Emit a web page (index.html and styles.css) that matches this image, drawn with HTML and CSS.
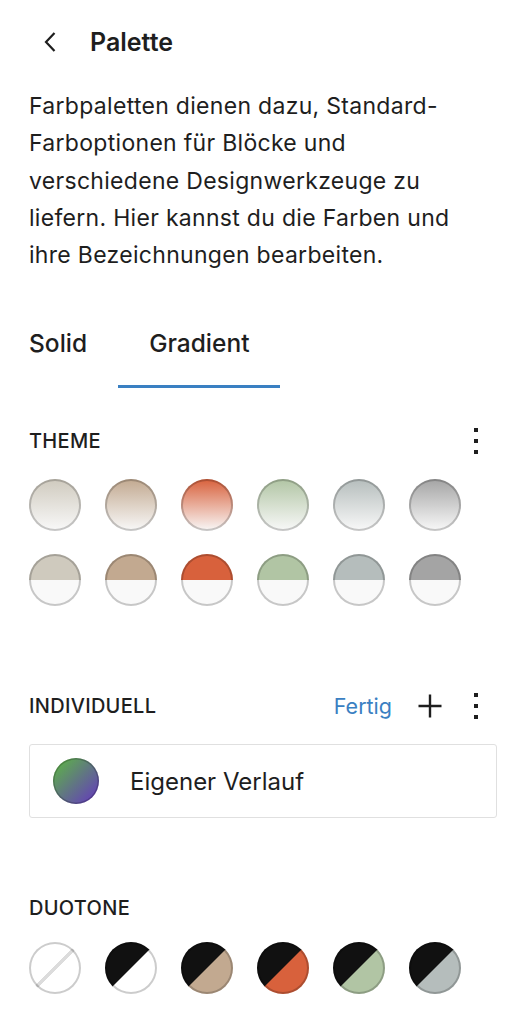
FILE: index.html
```html
<!DOCTYPE html>
<html lang="de">
<head>
<meta charset="utf-8">
<title>Palette</title>
<link rel="stylesheet" href="styles.css">
</head>
<body>
<div class="panel">
  <header class="header">
    <button class="back" aria-label="Zurück">
      <svg width="14" height="22" viewBox="0 0 14 22"><path d="M11.5 2 L3 11 L11.5 20" fill="none" stroke="#1e1e1e" stroke-width="2.2"/></svg>
    </button>
    <h1 class="title">Palette</h1>
  </header>
  <p class="desc">Farbpaletten dienen dazu, Standard-Farboptionen für Blöcke und verschiedene Designwerkzeuge zu liefern. Hier kannst du die Farben und ihre Bezeichnungen bearbeiten.</p>

  <div class="tabs">
    <div class="tab">Solid</div>
    <div class="tab active">Gradient</div>
  </div>

  <section class="sec sec-theme">
    <div class="sec-head">
      <span class="label">THEME</span>
      <span class="kebab"><i></i><i></i><i></i></span>
    </div>
    <div class="swatches">
      <span class="sw g1"></span><span class="sw g2"></span><span class="sw g3"></span><span class="sw g4"></span><span class="sw g5"></span><span class="sw g6"></span>
      <span class="sw h1"></span><span class="sw h2"></span><span class="sw h3"></span><span class="sw h4"></span><span class="sw h5"></span><span class="sw h6"></span>
    </div>
  </section>

  <section class="sec sec-custom">
    <div class="sec-head">
      <span class="label">INDIVIDUELL</span>
      <span class="actions">
        <span class="done">Fertig</span>
        <svg class="plus" width="24" height="24" viewBox="0 0 24 24"><path d="M12 0.5 V23.5 M0.5 12 H23.5" stroke="#1e1e1e" stroke-width="2.4" fill="none"/></svg>
        <span class="kebab"><i></i><i></i><i></i></span>
      </span>
    </div>
    <div class="card">
      <span class="cdot"></span>
      <span class="cname">Eigener Verlauf</span>
    </div>
  </section>

  <section class="sec sec-duo">
    <div class="sec-head">
      <span class="label">DUOTONE</span>
    </div>
    <div class="swatches">
      <span class="sw d0"></span><span class="sw d1"></span><span class="sw d2"></span><span class="sw d3"></span><span class="sw d4"></span><span class="sw d5"></span>
    </div>
  </section>
</div>
</body>
</html>
```

FILE: styles.css
```css
* { box-sizing: border-box; }
html, body { margin: 0; padding: 0; background: #fff; }
body {
  font-family: Inter, "Noto Sans", "Liberation Sans", sans-serif;
  color: #1e1e1e;
}
.panel { padding: 0 26px 0 29px; }

.header {
  height: 84px;
  display: flex;
  align-items: center;
}
.back {
  border: 0; background: none; padding: 0;
  margin-left: 13px;
  width: 16px; height: 24px;
  display: flex; align-items: center; justify-content: center;
}
.title {
  margin: 0 0 0 32px;
  font-size: 25px;
  font-weight: 600;
}

.desc {
  margin: 4px 0 0;
  padding-right: 6px;
  font-size: 23px;
  letter-spacing: 0.3px;
  line-height: 37.3px;
  color: #1e1e1e;
}

.tabs {
  display: flex;
  height: 89px;
  margin: 25px 0 0 -31px;
}
.tab {
  padding: 2px 31px 0;
  display: flex;
  align-items: center;
  font-size: 24.5px;
  font-weight: 500;
  border-bottom: 3px solid transparent;
}
.tab.active { border-bottom-color: #3a80c2; padding: 2px 30px 0 31px; }

.sec-head {
  height: 40px;
  display: flex;
  align-items: center;
  justify-content: space-between;
}
.label {
  font-size: 20px;
  font-weight: 500;
  letter-spacing: 0.3px;
}
.kebab {
  width: 18px; height: 32px;
  display: flex; flex-direction: column; align-items: center; justify-content: center;
  gap: 7px;
  margin-right: 12px;
}
.kebab i { display: block; width: 4px; height: 4px; background: #1e1e1e; }

.sec-theme { margin-top: 33px; }
.sec-custom { margin-top: 80px; }
.sec-duo { margin-top: 70px; }

.swatches {
  margin-top: 18px;
  display: grid;
  grid-template-columns: repeat(6, 52px);
  column-gap: 24px;
  row-gap: 23px;
}
.sec-duo .swatches { margin-top: 14px; }

.sw {
  width: 52px; height: 52px;
  border-radius: 50%;
  position: relative;
  display: block;
}
.sw::after {
  content: "";
  position: absolute; inset: 0;
  border-radius: 50%;
  box-shadow: inset 0 0 0 2px rgba(0,0,0,0.2);
}

.g1 { background: linear-gradient(#cfcabe, #f9f9f9); }
.g2 { background: linear-gradient(#c2a990, #f9f9f9); }
.g3 { background: linear-gradient(#d8613c, #f9f9f9); }
.g4 { background: linear-gradient(#b1c5a4, #f9f9f9); }
.g5 { background: linear-gradient(#b5bdbc, #f9f9f9); }
.g6 { background: linear-gradient(#a4a4a4, #f9f9f9); }
.h1 { background: linear-gradient(#cfcabe 50%, #f9f9f9 50%); }
.h2 { background: linear-gradient(#c2a990 50%, #f9f9f9 50%); }
.h3 { background: linear-gradient(#d8613c 50%, #f9f9f9 50%); }
.h4 { background: linear-gradient(#b1c5a4 50%, #f9f9f9 50%); }
.h5 { background: linear-gradient(#b5bdbc 50%, #f9f9f9 50%); }
.h6 { background: linear-gradient(#a4a4a4 50%, #f9f9f9 50%); }

.d0 { background: linear-gradient(-45deg, #fff calc(50% - 2px), #dcdcdc calc(50% - 1.5px), #dcdcdc calc(50% + 1.5px), #fff calc(50% + 2px)); }
.d1 { background: linear-gradient(135deg, #111 calc(50% - 0.5px), #fff calc(50% + 0.5px)); }
.d2 { background: linear-gradient(135deg, #111 calc(50% - 0.5px), #c2a990 calc(50% + 0.5px)); }
.d3 { background: linear-gradient(135deg, #111 calc(50% - 0.5px), #d8613c calc(50% + 0.5px)); }
.d4 { background: linear-gradient(135deg, #111 calc(50% - 0.5px), #b1c5a4 calc(50% + 0.5px)); }
.d5 { background: linear-gradient(135deg, #111 calc(50% - 0.5px), #b5bdbc calc(50% + 0.5px)); }

.actions { display: flex; align-items: center; }
.done {
  color: #3a80c2;
  font-size: 21.5px;
  font-weight: 400;
  margin-right: 26px;
}
.plus { margin-right: 25px; }
.actions .kebab { margin-right: 12px; }

.card {
  margin-top: 18px;
  height: 74px;
  border: 1.5px solid #e0e0e0;
  border-radius: 3px;
  display: flex;
  align-items: center;
  padding-left: 23px;
}
.cdot {
  width: 46px; height: 46px;
  border-radius: 50%;
  background: linear-gradient(135deg, #5cbb3e 0%, #6534c4 100%);
  box-shadow: inset 0 0 0 1.5px rgba(0,0,0,0.2);
}
.cname {
  margin-left: 31px;
  font-size: 24px;
}
```
